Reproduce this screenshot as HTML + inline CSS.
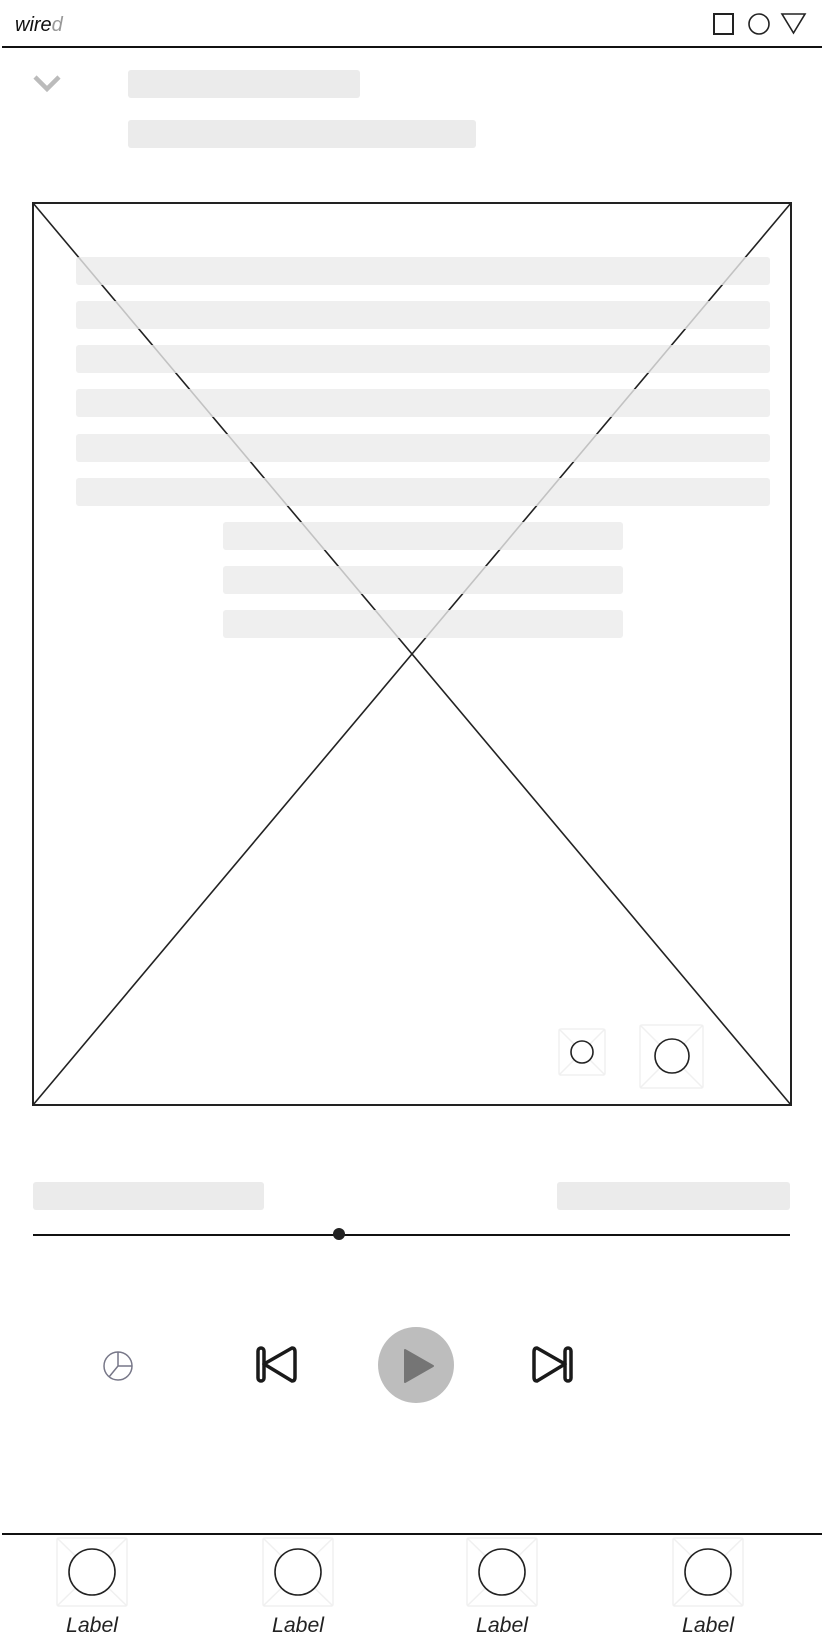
<!DOCTYPE html>
<html><head><meta charset="utf-8"><style>
html,body{margin:0;padding:0;background:#fff;width:822px;height:1646px;overflow:hidden}
svg{position:absolute;left:0;top:0}
</style></head><body>
<svg width="822" height="1646" viewBox="0 0 822 1646" xmlns="http://www.w3.org/2000/svg">
<text x="15" y="31" font-family="Liberation Sans, sans-serif" font-style="italic" font-size="20" fill="#111">wire<tspan fill="#999">d</tspan></text>
<rect x="714" y="14" width="19" height="20" fill="none" stroke="#222" stroke-width="2"/>
<circle cx="759" cy="24" r="10" fill="none" stroke="#222" stroke-width="1.6"/>
<path d="M782 14 L805 14 L793.5 33 Z" fill="none" stroke="#222" stroke-width="1.6"/>
<line x1="2" y1="47" x2="822" y2="47" stroke="#111" stroke-width="2"/>
<path d="M35 77 L47 89 L59 77" fill="none" stroke="#bbb" stroke-width="4.5"/>
<rect x="128" y="70" width="232" height="28" rx="3" fill="#ebebeb"/>
<rect x="128" y="120" width="348" height="28" rx="3" fill="#ebebeb"/>
<rect x="33" y="203" width="758" height="902" fill="none" stroke="#222" stroke-width="2"/>
<line x1="33" y1="203" x2="791" y2="1105" stroke="#222" stroke-width="1.6"/>
<line x1="791" y1="203" x2="33" y2="1105" stroke="#222" stroke-width="1.6"/>
<g fill="#ebebeb" fill-opacity="0.8">
<rect x="76" y="257" width="694" height="28" rx="3"/>
<rect x="76" y="301" width="694" height="28" rx="3"/>
<rect x="76" y="345" width="694" height="28" rx="3"/>
<rect x="76" y="389" width="694" height="28" rx="3"/>
<rect x="76" y="434" width="694" height="28" rx="3"/>
<rect x="76" y="478" width="694" height="28" rx="3"/>
<rect x="223" y="522" width="400" height="28" rx="3"/>
<rect x="223" y="566" width="400" height="28" rx="3"/>
<rect x="223" y="610" width="400" height="28" rx="3"/>
</g>
<g stroke="#f0f0f0" stroke-width="1.5" fill="#fff">
<rect x="559" y="1029" width="46" height="46" rx="2"/>
<path d="M559 1029 L605 1075 M605 1029 L559 1075" fill="none"/>
<rect x="640" y="1025" width="63" height="63" rx="2"/>
<path d="M640 1025 L703 1088 M703 1025 L640 1088" fill="none"/>
</g>
<circle cx="582" cy="1052" r="11" fill="#fff" stroke="#222" stroke-width="1.6"/>
<circle cx="672" cy="1056" r="17" fill="#fff" stroke="#222" stroke-width="1.6"/>
<rect x="33" y="1182" width="231" height="28" rx="3" fill="#ebebeb"/>
<rect x="557" y="1182" width="233" height="28" rx="3" fill="#ebebeb"/>
<line x1="33" y1="1235" x2="790" y2="1235" stroke="#111" stroke-width="2"/>
<circle cx="339" cy="1234" r="6" fill="#222"/>
<g stroke="#778" stroke-width="1.5" fill="none">
<circle cx="118" cy="1366" r="14"/>
<path d="M118 1352 L118 1366 L132 1366 M118 1366 L109 1377"/>
</g>
<g stroke="#1a1a1a" stroke-width="3.5" fill="none" stroke-linejoin="round" stroke-linecap="round">
<rect x="258" y="1348" width="6" height="33" rx="3"/>
<path d="M264 1364 L292 1348 Q295 1348 295 1352 L295 1377 Q295 1381 292 1381 Z"/>
<rect x="565" y="1348" width="6" height="33" rx="3"/>
<path d="M565 1364 L537 1348 Q534 1348 534 1352 L534 1377 Q534 1381 537 1381 Z"/>
</g>
<circle cx="416" cy="1365" r="38" fill="#bdbdbd"/>
<path d="M405 1350 L433 1366 L405 1382 Z" fill="#757575" stroke="#757575" stroke-width="2" stroke-linejoin="round"/>
<line x1="2" y1="1534" x2="822" y2="1534" stroke="#111" stroke-width="2"/>
<g stroke="#f0f0f0" stroke-width="1.5" fill="none">
<rect x="57" y="1538" width="70" height="68" rx="2"/><path d="M57 1538 L127 1606 M127 1538 L57 1606"/>
<rect x="263" y="1538" width="70" height="68" rx="2"/><path d="M263 1538 L333 1606 M333 1538 L263 1606"/>
<rect x="467" y="1538" width="70" height="68" rx="2"/><path d="M467 1538 L537 1606 M537 1538 L467 1606"/>
<rect x="673" y="1538" width="70" height="68" rx="2"/><path d="M673 1538 L743 1606 M743 1538 L673 1606"/>
</g>
<g stroke="#222" stroke-width="1.6" fill="#fff">
<circle cx="92" cy="1572" r="23"/>
<circle cx="298" cy="1572" r="23"/>
<circle cx="502" cy="1572" r="23"/>
<circle cx="708" cy="1572" r="23"/>
</g>
<g font-family="Liberation Sans, sans-serif" font-style="italic" font-size="21" fill="#222" text-anchor="middle">
<text x="92" y="1632" textLength="52" lengthAdjust="spacingAndGlyphs">Label</text>
<text x="298" y="1632" textLength="52" lengthAdjust="spacingAndGlyphs">Label</text>
<text x="502" y="1632" textLength="52" lengthAdjust="spacingAndGlyphs">Label</text>
<text x="708" y="1632" textLength="52" lengthAdjust="spacingAndGlyphs">Label</text>
</g>
</svg>
</body></html>
